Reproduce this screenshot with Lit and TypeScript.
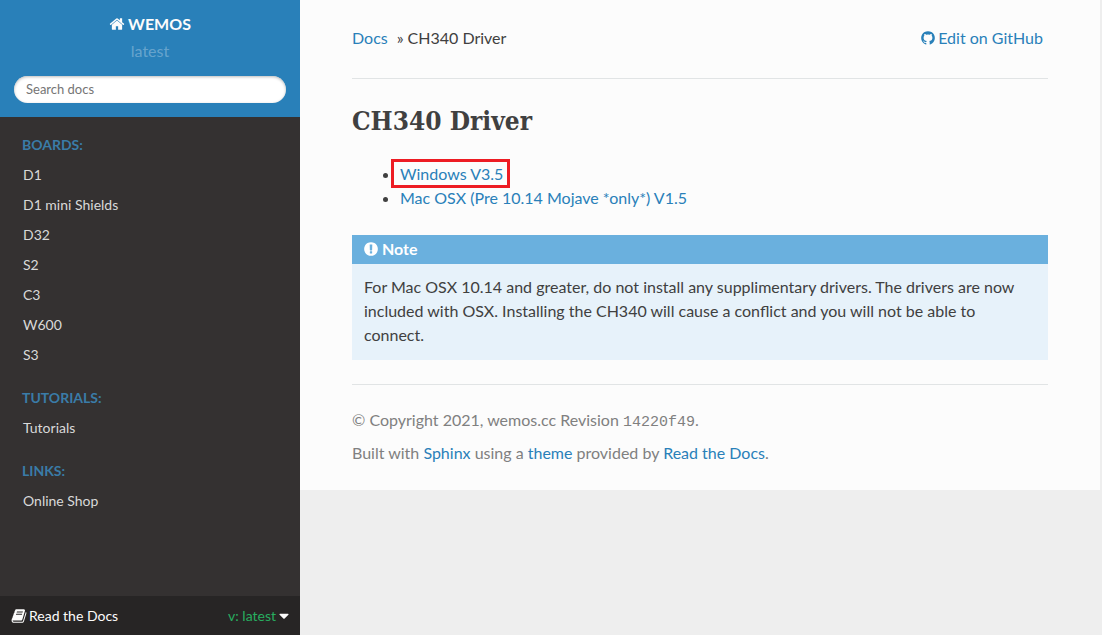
import { LitElement, html, css, svg } from "lit";
import { customElement } from "lit/decorators.js";

const ICONS = {
  home: "M1472 992v480q0 26-19 45t-45 19h-384v-384h-256v384h-384q-26 0-45-19t-19-45v-480q0-1 .5-3t.5-3l575-474 575 474q1 2 1 6zm223-69l-62 74q-8 9-21 11h-3q-13 0-21-7l-692-577-692 577q-12 8-24 7-13-2-21-11l-62-74q-8-10-7-23.5t11-21.5l719-599q32-26 76-26t76 26l244 204v-195q0-14 9-23t23-9h192q14 0 23 9t9 23v408l219 182q10 8 11 21.5t-7 23.5z",
  note: "M896 128q209 0 385.5 103t279.5 279.5 103 385.5-103 385.5-279.5 279.5-385.5 103-385.5-103-279.5-279.5-103-385.5 103-385.5 279.5-279.5 385.5-103zm128 1247v-190q0-14-9-23.5t-22-9.5h-192q-13 0-23 10t-10 23v190q0 13 10 23t23 10h192q13 0 22-9.5t9-23.5zm-2-344l18-621q0-12-10-18-10-8-24-8h-220q-14 0-24 8-10 6-10 18l17 621q0 10 10 17.5t24 7.5h185q14 0 23.5-7.5t10.5-17.5z",
  github: "M896 128q209 0 385.5 103t279.5 279.5 103 385.5q0 251-146.5 451.5t-378.5 277.5q-27 5-40-7t-13-30q0-3 .5-76.5t.5-134.5q0-97-52-142 57-6 102.5-18t94-39 81-66.5 53-105 20.5-150.5q0-119-79-206 37-91-8-204-28-9-81 11t-92 44l-38 24q-93-26-192-26t-192 26q-16-11-42.5-27t-83.5-38.5-85-13.5q-45 113-8 204-79 87-79 206 0 85 20.5 150t52.5 105 80.5 67 94 39 102.5 18q-39 36-49 103-21 10-45 15t-57 5-65.5-21.5-55.5-62.5q-19-32-48.5-52t-49.5-24l-20-3q-21 0-29 4.5t-5 11.5 9 14 13 12l7 5q22 10 43.5 38t31.5 51l10 23q13 38 44 61.5t67 30 69.5 7 55.5-3.5l23-4q0 38 .5 88.5t.5 54.5q0 18-13 30t-40 7q-232-77-378.5-277.5t-146.5-451.5q0-209 103-385.5t279.5-279.5 385.5-103z",
  book: "M1703 478q40 57 18 129l-275 906q-19 64-76.5 107.5t-122.5 43.5h-923q-77 0-148.5-53.5t-99.5-131.5q-24-67-2-127 0-4 3-27t4-37q1-8-3-21.5t-3-19.5q2-11 8-21t16.5-23.5 16.5-23.5q23-38 45-91.5t30-91.5q3-10 .5-30t-.5-28q3-11 17-28t17-23q21-36 42-92t25-90q1-9-2.5-32t.5-28q4-13 22-30.5t22-22.5q19-26 42.5-84.5t27.5-96.5q1-8-3-25.5t-2-26.5q2-8 9-18t18-23 17-21q8-12 16.5-30.5t15-35 16-36 19.5-32 26.5-23.5 36-11.5 47.5 5.5l-1 3q38-9 51-9h761q74 0 114 56t18 130l-274 906q-36 119-71.5 153.5t-128.5 34.5h-869q-27 0-38 15-11 16-1 43 24 70 144 70h923q29 0 56-15.5t35-41.5l300-987q7-22 5-57 38 15 59 43zm-1064 2q-4 13 2 22.5t20 9.5h608q13 0 25.5-9.5t16.5-22.5l21-64q4-13-2-22.5t-20-9.5h-608q-13 0-25.5 9.5t-16.5 22.5zm-83 256q-4 13 2 22.5t20 9.5h608q13 0 25.5-9.5t16.5-22.5l21-64q4-13-2-22.5t-20-9.5h-608q-13 0-25.5 9.5t-16.5 22.5z",
  caret: "M1408 704q0 26-19 45l-448 448q-19 19-45 19t-45-19l-448-448q-19-19-19-45t19-45 45-19h896q26 0 45 19t19 45z",
};

const icon = (name: keyof typeof ICONS) => html`
  <svg class="icon" viewBox="0 0 1792 1792" aria-hidden="true">${svg`<path d=${ICONS[name]} />`}</svg>`;

const MENU = [
  { caption: "BOARDS:", items: ["D1", "D1 mini Shields", "D32", "S2", "C3", "W600", "S3"] },
  { caption: "TUTORIALS:", items: ["Tutorials"] },
  { caption: "LINKS:", items: ["Online Shop"] },
];

@customElement("docs-sidebar")
export class DocsSidebar extends LitElement {
  static styles = css`
    :host {
      display: flex;
      flex-direction: column;
      background: #343131;
      font-size: 14px;
    }
    a { text-decoration: none; }
    .icon { width: 16px; height: 16px; fill: currentColor; flex: none; }
    .search {
      background: #2980b9;
      padding: 12px 14px 14px;
      text-align: center;
    }
    .home {
      display: flex;
      align-items: center;
      justify-content: center;
      gap: 3px;
      color: #fcfcfc;
      font-size: 16px;
      font-weight: 700;
      line-height: 24px;
    }
    .version {
      color: rgba(255, 255, 255, 0.3);
      font-size: 16px;
      line-height: 24px;
      margin: 3px 0 13px;
    }
    .field {
      display: block;
      box-sizing: border-box;
      width: 100%;
      height: 27px;
      margin: 0;
      padding: 0 12px 2px;
      border: 0;
      border-radius: 50px;
      background: #fff;
      box-shadow: inset 0 1px 3px #bbb;
      color: #333;
      font: inherit;
      font-size: 13px;
      outline: 0;
    }
    .field::placeholder { color: #757575; opacity: 1; }
    .menu {
      flex: 1;
      display: flex;
      flex-direction: column;
      gap: 13px;
      padding: 13px 22px;
    }
    .caption {
      margin: 0;
      color: #3a7ca8;
      font-size: 14px;
      font-weight: 700;
      line-height: 30px;
    }
    .items { list-style: none; margin: 0; padding: 0 1px; }
    .item { display: block; color: #d9d9d9; line-height: 30px; }
    .versions {
      display: flex;
      align-items: center;
      justify-content: space-between;
      box-sizing: border-box;
      width: 100%;
      height: 39px;
      padding: 0 8px 0 11px;
      border: 0;
      background: #272525;
      color: #fcfcfc;
      font: inherit;
      cursor: pointer;
    }
    .brand, .current { display: flex; align-items: center; }
    .brand { gap: 2px; }
    .current { color: #27ae60; }
    .current .icon { color: #fcfcfc; }
  `;

  render() {
    return html`
      <div class="search">
        <a class="home" href="#">${icon("home")}<span>WEMOS</span></a>
        <div class="version">latest</div>
        <form role="search">
          <input class="field" type="text" aria-label="Search docs" placeholder="Search docs" />
        </form>
      </div>
      <nav class="menu" aria-label="Main">
        ${MENU.map(
          (group) => html`
            <section>
              <p class="caption">${group.caption}</p>
              <ul class="items">
                ${group.items.map((item) => html`<li><a class="item" href="#">${item}</a></li>`)}
              </ul>
            </section>
          `
        )}
      </nav>
      <button class="versions" type="button">
        <span class="brand">${icon("book")}<span>Read the Docs</span></span>
        <span class="current"><span>v: latest</span>${icon("caret")}</span>
      </button>
    `;
  }
}

@customElement("docs-page")
export class DocsPage extends LitElement {
  static styles = css`
    :host {
      display: block;
      box-sizing: border-box;
      max-width: 800px;
      padding: 26px 52px 25px;
      background: #fcfcfc;
      color: #404040;
      font-size: 16px;
      line-height: 24px;
    }
    a { color: #2980b9; text-decoration: none; }
    .icon { width: 16px; height: 16px; fill: currentColor; flex: none; }
    .crumbs { display: flex; justify-content: space-between; }
    .trail { display: flex; gap: 4px; }
    .trail .root { margin-right: 5px; }
    .edit { display: flex; align-items: center; gap: 2px; margin-right: 5px; }
    .rule { height: 1px; margin: 24px 0 23px; border: 0; background: #e1e4e5; }
    .crumbs + .rule { margin-top: 28px; }
    .title {
      margin: 0 0 22px;
      font-family: "Roboto Slab", "DejaVu Serif Condensed", "DejaVu Serif", serif;
      font-size: 26px;
      font-stretch: condensed;
      font-weight: 700;
      line-height: 38px;
    }
    .downloads { margin: 0 0 25px; padding: 0 0 0 48px; }
    .marked { position: relative; }
    .marked::after {
      content: "";
      position: absolute;
      inset: -5px -7px -5px -9px;
      border: 3px solid #ed1c24;
      pointer-events: none;
    }
    .note { background: #e7f2fa; }
    .note-title {
      display: flex;
      align-items: center;
      gap: 3px;
      margin: 0;
      padding: 0 11px 1px;
      background: #6ab0de;
      color: #fff;
      font-weight: 700;
      line-height: 28px;
    }
    .note-text { margin: 0; padding: 11px 12px 13px; }
    .footer { color: #808080; }
    .footer p { margin: 0 0 9px; }
    .footer p:last-child { margin: 0; }
    .hash {
      font-family: "Liberation Mono", monospace;
      font-size: 15px;
      line-height: 16px;
    }
  `;

  render() {
    return html`
      <nav class="crumbs" aria-label="Breadcrumbs">
        <div class="trail">
          <a class="root" href="#">Docs</a><span>»</span><span>CH340 Driver</span>
        </div>
        <a class="edit" href="#">${icon("github")}<span>Edit on GitHub</span></a>
      </nav>
      <hr class="rule" />
      <main>
        <h1 class="title">CH340 Driver</h1>
        <ul class="downloads">
          <li><a class="marked" href="#">Windows V3.5</a></li>
          <li><a href="#">Mac OSX (Pre 10.14 Mojave *only*) V1.5</a></li>
        </ul>
        <aside class="note">
          <p class="note-title">${icon("note")}<span>Note</span></p>
          <p class="note-text">
            For Mac OSX 10.14 and greater, do not install any supplimentary drivers. The drivers are
            now included with OSX. Installing the CH340 will cause a conflict and you will not be
            able to connect.
          </p>
        </aside>
      </main>
      <hr class="rule" />
      <footer class="footer">
        <p>© Copyright 2021, wemos.cc Revision <code class="hash">14220f49</code>.</p>
        <p>
          Built with <a href="#">Sphinx</a> using a <a href="#">theme</a> provided by
          <a href="#">Read the Docs</a>.
        </p>
      </footer>
    `;
  }
}

@customElement("app-root")
export class AppRoot extends LitElement {
  static styles = css`
    :host {
      display: grid;
      grid-template-columns: 300px minmax(0, 1fr);
      min-height: 100vh;
      background: #eee;
      font-family: Lato, "Liberation Sans", sans-serif;
    }
    .page { align-self: start; }
  `;

  render() {
    return html`<docs-sidebar></docs-sidebar><docs-page class="page"></docs-page>`;
  }
}
